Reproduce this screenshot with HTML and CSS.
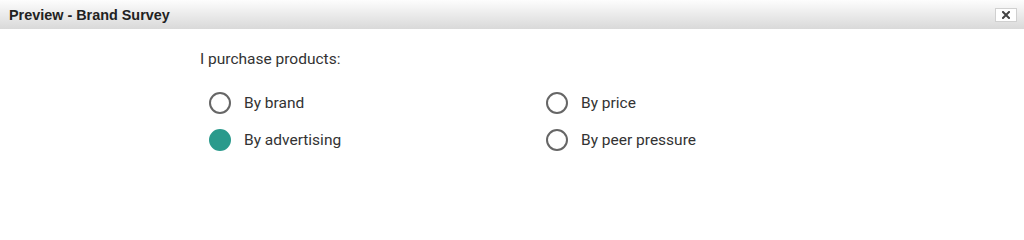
FILE: index.html
```html
<!DOCTYPE html>
<html>
<head>
<meta charset="utf-8">
<link rel="stylesheet" href="styles.css">
</head>
<body>
<div class="dialog">
  <div class="titlebar">
    <span class="title">Preview - Brand Survey</span>
    <button class="close" aria-label="Close">
      <svg width="8" height="8" viewBox="0 0 8 8"><path d="M1 1L7 7M7 1L1 7" stroke="#444" stroke-width="2" stroke-linecap="square"/></svg>
    </button>
  </div>
  <div class="content">
    <div class="question">I purchase products:</div>
    <div class="options">
      <label class="option"><span class="radio"></span><span class="label">By brand</span></label>
      <label class="option"><span class="radio"></span><span class="label">By price</span></label>
      <label class="option"><span class="radio checked"></span><span class="label">By advertising</span></label>
      <label class="option"><span class="radio"></span><span class="label">By peer pressure</span></label>
    </div>
  </div>
</div>
</body>
</html>
```
FILE: styles.css
```css
html, body { margin: 0; padding: 0; background: #fff; }
body { font-family: Roboto, "Liberation Sans", Arial, sans-serif; color: #333; }
.titlebar {
  height: 29px;
  box-sizing: border-box;
  display: flex;
  align-items: center;
  justify-content: space-between;
  padding: 0 7px 0 9px;
  background: linear-gradient(#fdfdfd, #d9d9d9);
}
.title {
  font-family: "Liberation Sans", Arial, sans-serif;
  font-weight: bold;
  font-size: 14.4px;
  color: #222;
}
.close {
  width: 22px;
  height: 14px;
  padding: 0;
  margin-top: 1px;
  border: 1px solid #d0d0d0;
  background: #fff;
  display: flex;
  align-items: center;
  justify-content: center;
}
.content { padding: 21px 0 0 200px; }
.question { font-size: 15.5px; line-height: 18px; }
.options {
  display: grid;
  grid-template-columns: 337px 337px;
  row-gap: 15px;
  margin-top: 24px;
  padding-left: 9px;
}
.option { display: flex; align-items: center; gap: 13px; font-size: 15.5px; line-height: 22px; }
.radio {
  width: 22px; height: 22px; box-sizing: border-box;
  border: 2px solid #666; border-radius: 50%;
  flex: none;
}
.radio.checked { background: #2a9a8c; border-color: #2a9a8c; }
```
